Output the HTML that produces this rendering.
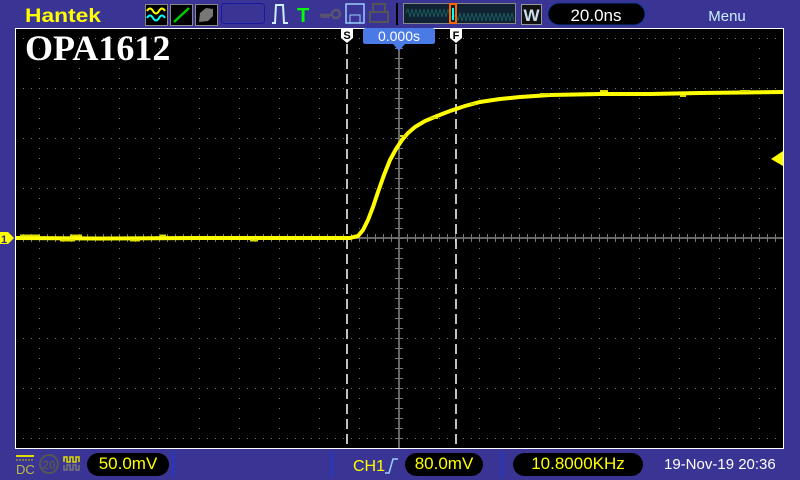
<!DOCTYPE html>
<html><head><meta charset="utf-8"><style>
*{margin:0;padding:0}
body{width:800px;height:480px;background:#3a3494;overflow:hidden;position:relative;font-family:"Liberation Sans",sans-serif}
.pill{position:absolute;background:#000;border-radius:12px;color:#ff0;font-size:17px;text-align:center;line-height:22px}
</style></head><body>
<svg width="800" height="480" style="position:absolute;left:0;top:0">
<defs>
<pattern id="rd" width="8" height="50" patternUnits="userSpaceOnUse"><rect x="7" y="38" width="1" height="1" fill="#777"/></pattern>
<pattern id="cd" width="40" height="10" patternUnits="userSpaceOnUse"><rect x="39" y="8" width="1" height="1" fill="#777"/></pattern>
<pattern id="ht" width="8" height="10" patternUnits="userSpaceOnUse"><rect x="7" y="0" width="1" height="10" fill="#777"/></pattern>
<pattern id="vt" width="10" height="10" patternUnits="userSpaceOnUse"><rect x="0" y="8" width="10" height="1" fill="#777"/></pattern>
<clipPath id="sc"><rect x="16" y="29" width="767" height="419"/></clipPath>
</defs>
<text x="25" y="22" font-family="Liberation Sans" font-weight="bold" font-size="19" fill="#ffff00" transform="translate(25 0) scale(1.2 1) translate(-25 0)">Hantek</text>
<rect x="145.5" y="4.5" width="22" height="21" fill="#000" stroke="#888"/>
<path d="M147 11 q3-5 6 0 t6 0 t6 0" stroke="#ff0" stroke-width="2" fill="none"/>
<path d="M147 18 q3-5 6 0 t6 0 t6 0" stroke="#0ff" stroke-width="2" fill="none"/>
<rect x="170.5" y="4.5" width="22" height="21" fill="#000" stroke="#888"/>
<path d="M174 22 L189 8" stroke="#0c0" stroke-width="2.5"/>
<rect x="195.5" y="4.5" width="22" height="21" fill="#000" stroke="#888"/>
<path d="M199 22 L200 13 L206 8 L213 9 L213 16 L208 21 Z" fill="#777"/>
<rect x="221.5" y="3.5" width="43" height="20" rx="3" fill="none" stroke="#1a1aa0"/>
<path d="M272 23 L275 23 L276 5 L283 5 L284 23 L288 23" stroke="#cef" stroke-width="2" fill="none"/>
<text x="297" y="22" font-family="Liberation Sans" font-weight="bold" font-size="20" fill="#0f0">T</text>
<path d="M320 15 h12 M322 15 v3 M325 15 v3 M328 15 v3" stroke="#5a5470" stroke-width="2.5"/><circle cx="336" cy="14" r="4" fill="none" stroke="#5a5470" stroke-width="2.5"/>
<rect x="346" y="4" width="18" height="19" fill="none" stroke="#9cf" stroke-width="1.5"/><rect x="350" y="15" width="10" height="8" fill="none" stroke="#9cf"/>
<rect x="373" y="4" width="12" height="8" fill="none" stroke="#555" stroke-width="2"/><rect x="370" y="12" width="18" height="10" fill="none" stroke="#555" stroke-width="2"/>
<rect x="396" y="3" width="2" height="22" fill="#000"/>
<rect x="403.5" y="3.5" width="112" height="20" fill="#123" stroke="#888"/>
<path d="M406 13 l2 -4 l2 8 l2 -8 l2 8 l2 -8 l2 8 l2 -8 l2 8 l2 -8 l2 8 l2 -8 l2 8 l2 -8 l2 8 l2 -8 l2 8 l2 -8 l2 8 l2 -8 l2 8 l2 -8 l2 8 l4 0 l2 -4 l2 8 l2 -8 l2 8 l2 -8 l2 8 l2 -8 l2 8 l2 -8 l2 8 l2 -8 l2 8 l2 -8 l2 8 l2 -8 l2 8 l2 -8 l2 8 l2 -8 l2 8 l2 -8 l2 8 l2 -8 l2 8 l2 -8 l2 8 l2 -8 l2 8 l2 -8 l2 8" stroke="#1a5a5a" fill="none"/>
<rect x="450" y="4" width="6" height="19" fill="none" stroke="#f60" stroke-width="2"/><path d="M453 8 v12" stroke="#0ff" stroke-width="2"/>
<rect x="521.5" y="4.5" width="20" height="20" fill="#111" stroke="#999"/>
<text x="531.5" y="21" text-anchor="middle" font-weight="bold" font-size="17" fill="#cde">W</text>
<rect x="548" y="3" width="97" height="22" rx="11" fill="#000" stroke="#123a9a"/>
<text x="596" y="21" text-anchor="middle" font-size="17" fill="#fff">20.0ns</text>
<text x="727" y="21" text-anchor="middle" font-size="15" fill="#cef">Menu</text>
<rect x="15.5" y="28.5" width="768" height="420" fill="#000" stroke="#fff"/>
<g clip-path="url(#sc)">
<rect x="16" y="29" width="767" height="419" fill="url(#rd)"/>
<rect x="16" y="29" width="767" height="419" fill="url(#cd)"/>
<rect x="16" y="237" width="767" height="2" fill="#666"/>
<rect x="16" y="234" width="767" height="8" fill="url(#ht)"/>
<rect x="398" y="29" width="2" height="419" fill="#666"/>
<rect x="395" y="29" width="8" height="419" fill="url(#vt)"/>
<path d="M347 44 V448 M456 44 V448" stroke="#fff" stroke-width="1.5" stroke-dasharray="10,5"/>
<polyline points="16,238 100,238.5 200,238 300,238 350,238 358,236 363,230 368,220 373,207 378,192 384,175 390,160 396,149 402,140 408,133 415,127 425,121 437,116 450,111 465,106 480,102 500,99 520,97 550,95 600,94 650,94 700,93 783,92" fill="none" stroke="#ff0" stroke-width="4"/>
<path d="M20 235.5h20 M60 240.5h15 M70 235.5h12 M130 240.5h10 M160 235.5h6 M250 240.5h8 M400 136h6 M430 118h8 M470 104h6 M540 94h10 M600 91h8 M680 96h6 M740 91h10" stroke="#dd0" stroke-width="2"/>
</g>
<text x="25" y="60" font-family="Liberation Serif" font-weight="bold" font-size="36" fill="#fff">OPA1612</text>
<path d="M341 29 h12 v9 l-6 5 l-6 -5 z" fill="#fff"/><text x="347" y="39" text-anchor="middle" font-weight="bold" font-size="11" fill="#000">S</text>
<path d="M450 29 h12 v9 l-6 5 l-6 -5 z" fill="#fff"/><text x="456" y="39" text-anchor="middle" font-weight="bold" font-size="11" fill="#000">F</text>
<path d="M366 28 h66 q3 0 3 3 v11 q0 2 -3 2 h-27 l-6 7 l-6 -7 h-27 q-3 0 -3 -2 v-11 q0 -3 3 -3z" fill="#4a7ae6"/>
<text x="399" y="41" text-anchor="middle" font-size="14" fill="#fff">0.000s</text>
<path d="M783 151 L771 159 L783 166 Z" fill="#ff0"/>
<path d="M0 232 h8 l6 6 l-6 6 h-8z" fill="#ff0"/><text x="4" y="243" text-anchor="middle" font-weight="bold" font-size="11" fill="#2a2a8a">1</text>
<path d="M16 456 h18" stroke="#dd0" stroke-width="2"/><path d="M16 460 h18" stroke="#bb0" stroke-dasharray="2,1"/>
<text x="16" y="474" font-size="13" fill="#bb4">DC</text>
<circle cx="49" cy="464" r="9" fill="none" stroke="#555" stroke-width="2"/><text x="49" y="469" text-anchor="middle" font-size="12" font-weight="bold" fill="#555">20</text>
<path d="M64 462 v-5 h3 v5 h3 v-5 h3 v5 h3 v-5 h3 v5" stroke="#dd0" fill="none" stroke-width="1.5"/>
<path d="M64 465 v5 h3 v-5 h3 v5 h3 v-5 h3 v5 h3 v-5" stroke="#777" fill="none" stroke-width="1.5"/>
<rect x="172" y="452" width="1.5" height="25" fill="#1a3adc"/>
<rect x="331" y="452" width="1.5" height="25" fill="#1a3adc"/>
<rect x="501" y="452" width="1.5" height="25" fill="#1a3adc"/>
<text x="353" y="471" font-size="16" fill="#ff0">CH1</text>
<path d="M385 473 h4 l4 -14 h5" stroke="#9cf" stroke-width="1.5" fill="none"/>
</svg>
<div class="pill" style="left:87px;top:453px;width:82px;height:23px">50.0mV</div>
<div class="pill" style="left:405px;top:453px;width:78px;height:23px">80.0mV</div>
<div class="pill" style="left:513px;top:453px;width:130px;height:23px">10.8000KHz</div>
<div style="position:absolute;left:664px;top:456px;font-size:15px;color:#fff;white-space:nowrap">19-Nov-19 20:36</div>
</body></html>
